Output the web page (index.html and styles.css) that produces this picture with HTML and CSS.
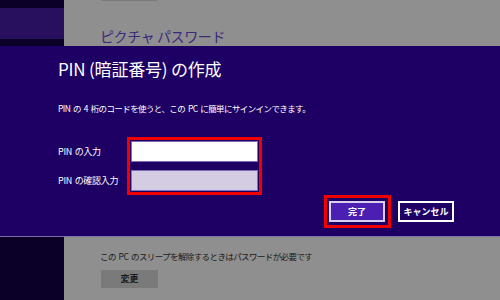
FILE: index.html
```html
<!DOCTYPE html>
<html lang="ja">
<head>
    <meta charset="UTF-8">
    <title>PIN の作成</title>
    <link rel="stylesheet" href="styles.css">
</head>
<body>
    <div class="page">
        <div class="band band-top">
            <div class="side side-top">
                <div class="side-active"></div>
            </div>
            <div class="settings settings-top">
                <div class="stub-button"></div>
                <h2 class="section-title">ピクチャ パスワード</h2>
            </div>
        </div>

        <div class="dialog">
            <h1 class="dialog-title">PIN (暗証番号) の作成</h1>
            <p class="dialog-text">PIN の 4 桁のコードを使うと、この PC に簡単にサインインできます。</p>

            <div class="form">
                <div class="labels">
                    <label for="pin">PIN の入力</label>
                    <label for="pin2">PIN の確認入力</label>
                </div>
                <div class="highlight fields">
                    <input type="password" id="pin" class="pin-input">
                    <input type="password" id="pin2" class="pin-input pin-confirm">
                </div>
            </div>

            <div class="actions">
                <div class="highlight">
                    <button class="btn btn-primary">完了</button>
                </div>
                <button class="btn">キャンセル</button>
            </div>
        </div>

        <div class="band band-bottom">
            <div class="side"></div>
            <div class="settings settings-bottom">
                <p class="setting-text">この PC のスリープを解除するときはパスワードが必要です</p>
                <button class="btn-gray">変更</button>
            </div>
        </div>
    </div>
</body>
</html>
```

FILE: styles.css
```css
:root {
    --dialog: #1e0064;
    --side: #0b0028;
    --side-active: #28105e;
    --gray: #8f8f8f;
    --red: #f20000;
}

* {
    box-sizing: border-box;
}

body {
    margin: 0;
    font-family: "Noto Sans CJK JP", "Noto Sans", sans-serif;
    background-color: var(--gray);
    overflow: hidden;
}

.page {
    width: 500px;
    height: 300px;
    display: flex;
    flex-direction: column;
}

.band {
    display: flex;
}

.band-top {
    height: 46px;
}

.band-bottom {
    flex: 1;
}

.side {
    width: 64px;
    background-color: var(--side);
}

.side-top {
    padding-top: 8px;
}

.side-active {
    height: 31px;
    background-color: var(--side-active);
}

.settings {
    flex: 1;
    background-color: var(--gray);
    padding-left: 36px;
}

.settings-top {
    overflow: hidden;
}

.stub-button {
    width: 56px;
    height: 1px;
    margin-left: 1px;
    background-color: #7a7a7a;
}

.section-title {
    margin: 25px 0 0;
    font-size: 14px;
    font-weight: normal;
    line-height: 20px;
    letter-spacing: -0.4px;
    color: #3a2a7c;
}

.dialog {
    height: 191px;
    background-color: var(--dialog);
    border-bottom: 1px solid #7d6fa8;
    padding: 10px 46px 0 58px;
    color: white;
}

.dialog-title {
    margin: 0;
    font-size: 17px;
    font-weight: normal;
    line-height: 26px;
    letter-spacing: -0.2px;
}

.dialog-text {
    margin: 19px 0 0;
    font-size: 8.5px;
    line-height: 14px;
    letter-spacing: -0.6px;
    word-spacing: 1.5px;
}

.form {
    display: flex;
    margin-top: 22px;
}

.labels {
    width: 69px;
    display: flex;
    flex-direction: column;
    justify-content: center;
    gap: 15px;
    padding-top: 1px;
}

.labels label {
    font-size: 9px;
    line-height: 14px;
    letter-spacing: -0.3px;
    word-spacing: 1px;
}

.highlight {
    border: 3px solid var(--red);
    padding: 1px;
}

.fields {
    width: 135px;
    display: flex;
    flex-direction: column;
    gap: 8px;
}

.pin-input {
    width: 127px;
    height: 21px;
    margin: 0;
    border: 1px solid #7d6fb8;
    background-color: white;
}

.pin-confirm {
    background-color: #d4cce2;
}

.actions {
    display: flex;
    justify-content: flex-end;
    align-items: center;
    gap: 7px;
    margin-top: 0;
}

.actions .highlight {
    display: flex;
    padding: 3px 3px 3px 2px;
}

.btn {
    width: 56px;
    height: 21px;
    padding: 0;
    background-color: var(--dialog);
    border: 2px solid white;
    color: white;
    font-family: inherit;
    font-size: 9px;
    font-weight: bold;
}

.btn-primary {
    background-color: #4a1fb2;
    border-color: #d8d0f0;
}

.setting-text {
    margin: 12px 0 0;
    font-size: 8.5px;
    line-height: 14px;
    letter-spacing: -0.6px;
    word-spacing: 1.5px;
    color: #1a1a1a;
}

.btn-gray {
    width: 57px;
    height: 18px;
    margin: 1px 0 0 1px;
    padding: 0;
    border: none;
    background-color: #7a7a7a;
    color: #1a1a1a;
    font-family: inherit;
    font-size: 9px;
    font-weight: bold;
}
```
